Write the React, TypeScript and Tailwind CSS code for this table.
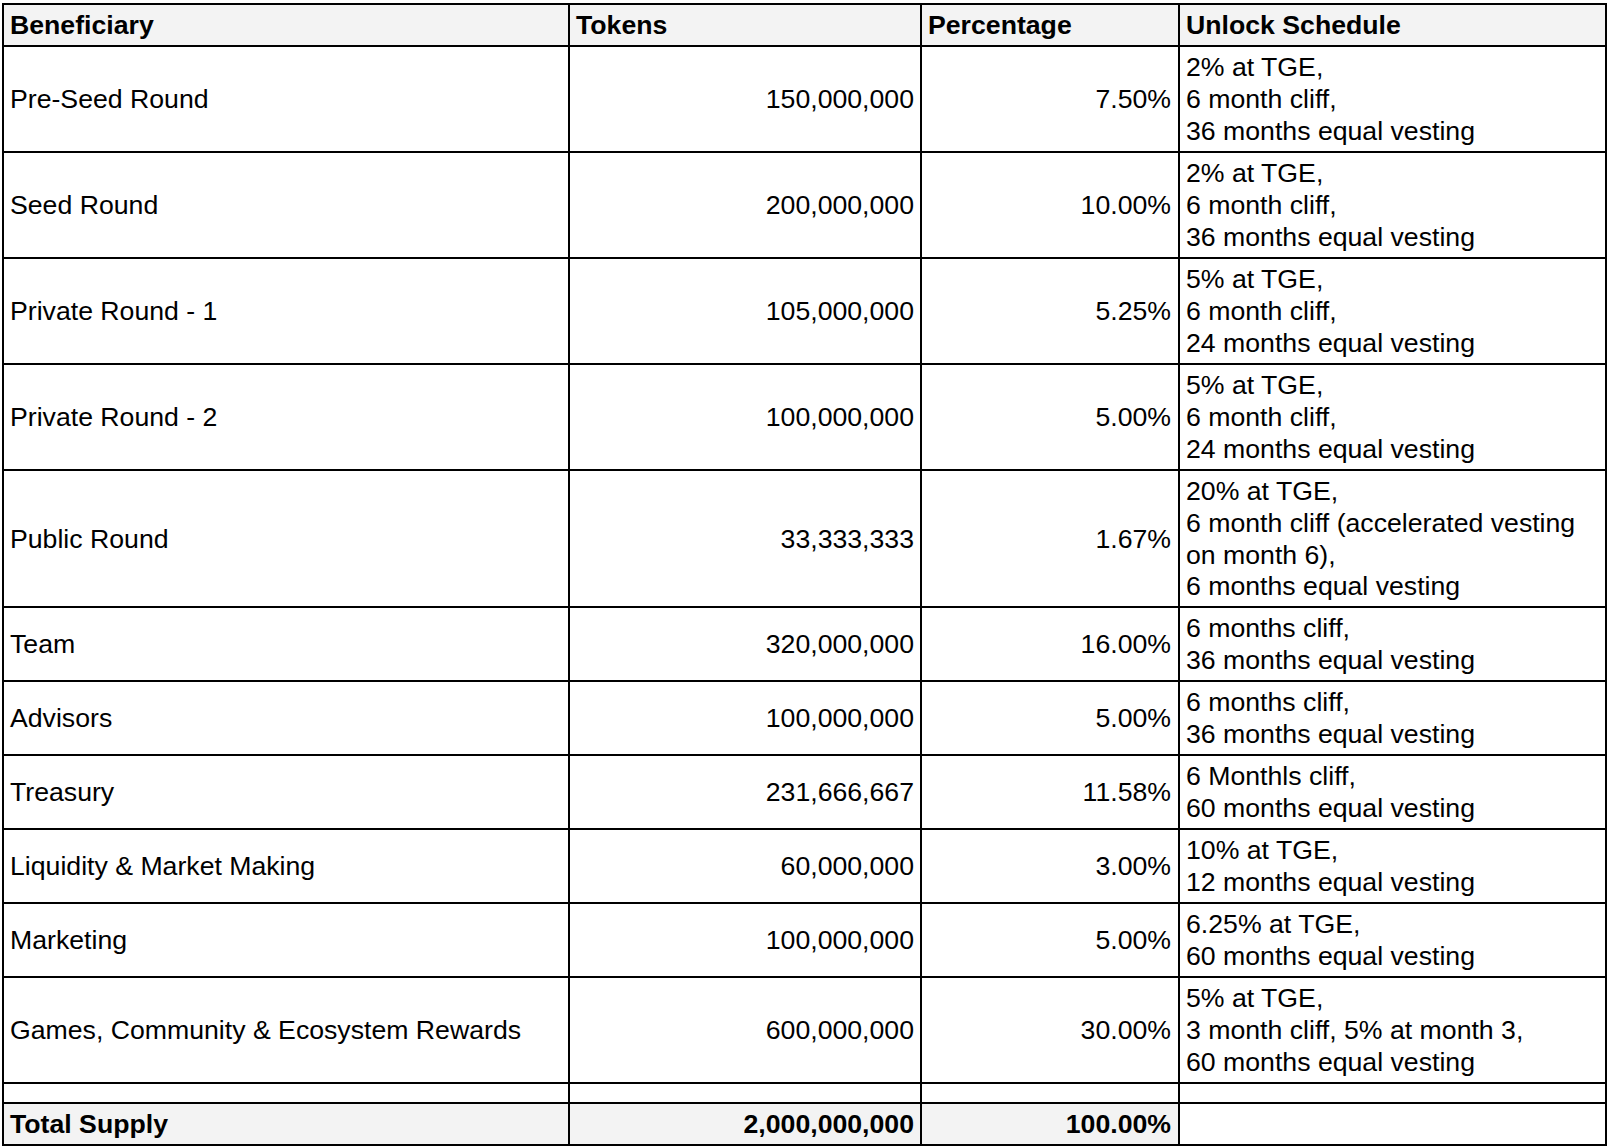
import React from "react";

type Row = {
  name: string;
  tokens: string;
  pct: string;
  sched: string;
  h: string;
};

const rows: Row[] = [
  { name: "Pre-Seed Round", tokens: "150,000,000", pct: "7.50%", sched: "2% at TGE,\n6 month cliff,\n36 months equal vesting", h: "h-[106px]" },
  { name: "Seed Round", tokens: "200,000,000", pct: "10.00%", sched: "2% at TGE,\n6 month cliff,\n36 months equal vesting", h: "h-[106px]" },
  { name: "Private Round - 1", tokens: "105,000,000", pct: "5.25%", sched: "5% at TGE,\n6 month cliff,\n24 months equal vesting", h: "h-[106px]" },
  { name: "Private Round - 2", tokens: "100,000,000", pct: "5.00%", sched: "5% at TGE,\n6 month cliff,\n24 months equal vesting", h: "h-[106px]" },
  { name: "Public Round", tokens: "33,333,333", pct: "1.67%", sched: "20% at TGE,\n6 month cliff (accelerated vesting on month 6),\n6 months equal vesting", h: "h-[137px]" },
  { name: "Team", tokens: "320,000,000", pct: "16.00%", sched: "6 months cliff,\n36 months equal vesting", h: "h-[74px]" },
  { name: "Advisors", tokens: "100,000,000", pct: "5.00%", sched: "6 months cliff,\n36 months equal vesting", h: "h-[74px]" },
  { name: "Treasury", tokens: "231,666,667", pct: "11.58%", sched: "6 Monthls cliff,\n60 months equal vesting", h: "h-[74px]" },
  { name: "Liquidity & Market Making", tokens: "60,000,000", pct: "3.00%", sched: "10% at TGE,\n12 months equal vesting", h: "h-[74px]" },
  { name: "Marketing", tokens: "100,000,000", pct: "5.00%", sched: "6.25% at TGE,\n60 months equal vesting", h: "h-[74px]" },
  { name: "Games, Community & Ecosystem Rewards", tokens: "600,000,000", pct: "30.00%", sched: "5% at TGE,\n3 month cliff, 5% at month 3,\n60 months equal vesting", h: "h-[106px]" },
];

const cell = "border-2 border-black px-[6px] pt-[2px] pb-0 align-middle";

export default function App() {
  return (
    <div
      className="min-h-[1148px] w-[1608px] bg-white text-black pt-[3px] pl-[2px]"
      style={{ fontFamily: '"Liberation Sans", Arial, sans-serif' }}
    >
      <table className="table-fixed border-collapse w-[1603px] text-[26.67px] leading-[31.7px]">
        <colgroup>
          <col className="w-[566px]" />
          <col className="w-[352px]" />
          <col className="w-[258px]" />
          <col className="w-[427px]" />
        </colgroup>
        <tbody>
          <tr className="h-[42px] bg-[#f3f3f3] font-bold">
            <td className={`${cell} text-left`}>Beneficiary</td>
            <td className={`${cell} text-left`}>Tokens</td>
            <td className={`${cell} text-left`}>Percentage</td>
            <td className={`${cell} text-left pl-[6px]`}>Unlock Schedule</td>
          </tr>
          {rows.map((r) => (
            <tr key={r.name} className={r.h}>
              <td className={`${cell} text-left`}>{r.name}</td>
              <td className={`${cell} text-right pr-[6px]`}>{r.tokens}</td>
              <td className={`${cell} text-right pr-[7px]`}>{r.pct}</td>
              <td className={`${cell} text-left whitespace-pre-line pl-[6px]`}>{r.sched}</td>
            </tr>
          ))}
          <tr className="h-[20px]">
            <td className={cell}></td>
            <td className={cell}></td>
            <td className={cell}></td>
            <td className={cell}></td>
          </tr>
          <tr className="h-[42px] font-bold">
            <td className={`${cell} text-left bg-[#f3f3f3]`}>Total Supply</td>
            <td className={`${cell} text-right pr-[6px] bg-[#f3f3f3]`}>2,000,000,000</td>
            <td className={`${cell} text-right pr-[7px] bg-[#f3f3f3]`}>100.00%</td>
            <td className={`${cell} bg-white`}></td>
          </tr>
        </tbody>
      </table>
    </div>
  );
}
